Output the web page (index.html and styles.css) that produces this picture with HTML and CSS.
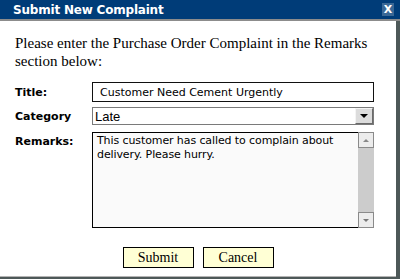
FILE: index.html
```html
<!DOCTYPE html>
<html>
<head>
<meta charset="utf-8">
<link rel="stylesheet" href="styles.css">
</head>
<body>
<div class="dialog">
  <div class="titlebar">
    <span class="title">Submit New Complaint</span>
    <span class="close">X</span>
  </div>
  <div class="titlebar-rule"></div>
  <div class="content">
    <p class="intro">Please enter the Purchase Order Complaint in the Remarks section below:</p>
    <div class="form">
      <label class="label">Title:</label>
      <input class="text-input" type="text" value="Customer Need Cement Urgently">
      <label class="label">Category</label>
      <div class="select">
        <span class="select-value">Late</span>
        <span class="select-button"><span class="tri-down"></span></span>
      </div>
      <label class="label label-top">Remarks:</label>
      <div class="remarks">
        <div class="remarks-text">This customer has called to complain about delivery. Please hurry.</div>
        <div class="scrollbar">
          <span class="scroll-btn"><span class="tri-up-small"></span></span>
          <span class="scroll-track"></span>
          <span class="scroll-btn"><span class="tri-down-small"></span></span>
        </div>
      </div>
    </div>
    <div class="actions">
      <button class="btn">Submit</button>
      <button class="btn">Cancel</button>
    </div>
  </div>
</div>
</body>
</html>
```

FILE: styles.css
```css
html, body {
  margin: 0;
  padding: 0;
  background: #fff;
}

.dialog {
  width: 400px;
  height: 279px;
  display: flex;
  flex-direction: column;
  background: #fff;
}

.titlebar {
  height: 19px;
  flex: none;
  background: #003c78;
  display: flex;
  align-items: center;
  justify-content: space-between;
  padding: 0 6px 0 13px;
}

.title {
  color: #fff;
  font: bold 12px "DejaVu Sans", Verdana, sans-serif;
  letter-spacing: -0.2px;
}

.close {
  width: 12px;
  height: 13px;
  background: #3a6896;
  color: #fff;
  font: bold 11px/13px "DejaVu Sans", Verdana, sans-serif;
  text-align: center;
}

.titlebar-rule {
  height: 2px;
  flex: none;
  background: #8c8c8c;
}

.content {
  flex: 1;
  padding-top: 13px;
  border-right: 4px solid #4d5858;
  border-bottom: 2px solid #4d5858;
  box-shadow: inset 0 -1px 0 #b4b4b4;
}

.intro {
  margin: 0 0 0 15px;
  font: 15px/18px "Liberation Serif", "Times New Roman", serif;
  color: #000;
}

.form {
  margin: 12px 0 0 15px;
  display: grid;
  grid-template-columns: 77px 282px;
  row-gap: 5px;
}

.label {
  align-self: center;
  font: bold 11px "DejaVu Sans", Verdana, sans-serif;
  color: #000;
}

.label-top {
  align-self: start;
  padding-top: 5px;
}

.text-input {
  box-sizing: border-box;
  width: 282px;
  height: 20px;
  margin: 0;
  border: 1px solid #111;
  padding: 0 7px;
  font: 11px "DejaVu Sans", Verdana, sans-serif;
  color: #000;
  background: #fff;
  outline: none;
}

.select {
  position: relative;
  box-sizing: border-box;
  height: 18px;
  border: 1px solid #7a7a7a;
  background: #fff;
  display: flex;
  align-items: center;
  padding-left: 2px;
}

.select-value {
  font: 13px "Liberation Sans", Arial, sans-serif;
  color: #000;
}

.select-button {
  position: absolute;
  right: 0;
  top: 0;
  box-sizing: border-box;
  width: 18px;
  height: 16px;
  background: #dcdcdc;
  border: 1px solid;
  border-color: #f4f4f4 #6a6a6a #6a6a6a #f4f4f4;
  display: flex;
  align-items: center;
  justify-content: center;
}

.tri-down {
  width: 0;
  height: 0;
  border-left: 4px solid transparent;
  border-right: 4px solid transparent;
  border-top: 4px solid #000;
}

.remarks {
  margin-top: 2px;
  display: flex;
  height: 96px;
}

.remarks-text {
  box-sizing: border-box;
  width: 266px;
  height: 96px;
  border: 1px solid #000;
  border-right: none;
  background: #fafafa;
  padding: 1px 4px;
  font: 11px/14px "DejaVu Sans", Verdana, sans-serif;
  letter-spacing: -0.1px;
  color: #000;
}

.scrollbar {
  width: 16px;
  height: 96px;
  display: flex;
  flex-direction: column;
  background: #cccccc;
}

.scroll-btn {
  box-sizing: border-box;
  width: 16px;
  height: 16px;
  border: 1px solid #8a8a8a;
  background: #ececec;
  display: flex;
  align-items: center;
  justify-content: center;
}

.scroll-track {
  flex: 1;
}

.tri-up-small {
  width: 0;
  height: 0;
  border-left: 3px solid transparent;
  border-right: 3px solid transparent;
  border-bottom: 3px solid #888;
}

.tri-down-small {
  width: 0;
  height: 0;
  border-left: 3px solid transparent;
  border-right: 3px solid transparent;
  border-top: 3px solid #777;
}

.actions {
  margin-top: 19px;
  display: flex;
  justify-content: center;
  gap: 9px;
}

.btn {
  box-sizing: border-box;
  width: 71px;
  height: 21px;
  margin: 0;
  padding: 0;
  border: 1px solid #000;
  background: #ffffd5;
  font: 14px "Liberation Serif", "Times New Roman", serif;
  color: #000;
}
```
